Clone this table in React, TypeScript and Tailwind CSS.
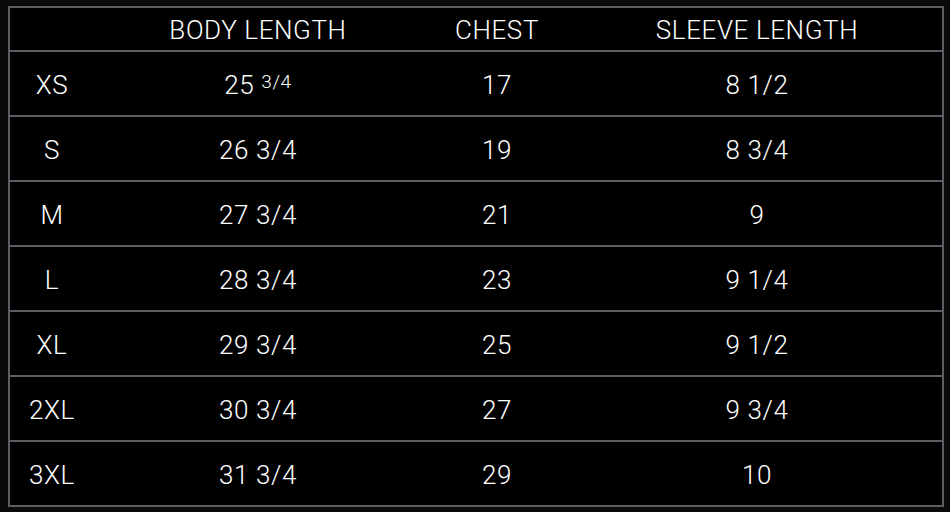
import React from "react";

const rows: [string, React.ReactNode, string, string][] = [
  ["XS", <>25 <sup className="text-[19px] relative top-[-6px]">3/4</sup></>, "17", "8 1/2"],
  ["S", "26 3/4", "19", "8 3/4"],
  ["M", "27 3/4", "21", "9"],
  ["L", "28 3/4", "23", "9 1/4"],
  ["XL", "29 3/4", "25", "9 1/2"],
  ["2XL", "30 3/4", "27", "9 3/4"],
  ["3XL", "31 3/4", "29", "10"],
];

const cols = "grid grid-cols-[84px_328px_150px_370px]";

export default function App() {
  return (
    <div
      className="w-[950px] h-[512px] bg-[#0a0a0a] pl-[8px] pt-[6px] text-white"
      style={{ fontFamily: "Roboto, 'Open Sans', sans-serif" }}
    >
      <div className="w-[936px] border-2 border-[#5b5e63] bg-black text-[26px] font-light tracking-[0.6px]">
        <div className={`${cols} h-[42px] items-center pt-[2px]`}>
          <div />
          <div className="text-center">BODY LENGTH</div>
          <div className="text-center">CHEST</div>
          <div className="text-center">SLEEVE LENGTH</div>
        </div>
        {rows.map((r, i) => (
          <div key={i} className={`${cols} h-[65px] items-center border-t-2 border-[#5b5e63] pt-[3px]`}>
            <div className="text-center">{r[0]}</div>
            <div className="text-center">{r[1]}</div>
            <div className="text-center">{r[2]}</div>
            <div className="text-center">{r[3]}</div>
          </div>
        ))}
      </div>
    </div>
  );
}
